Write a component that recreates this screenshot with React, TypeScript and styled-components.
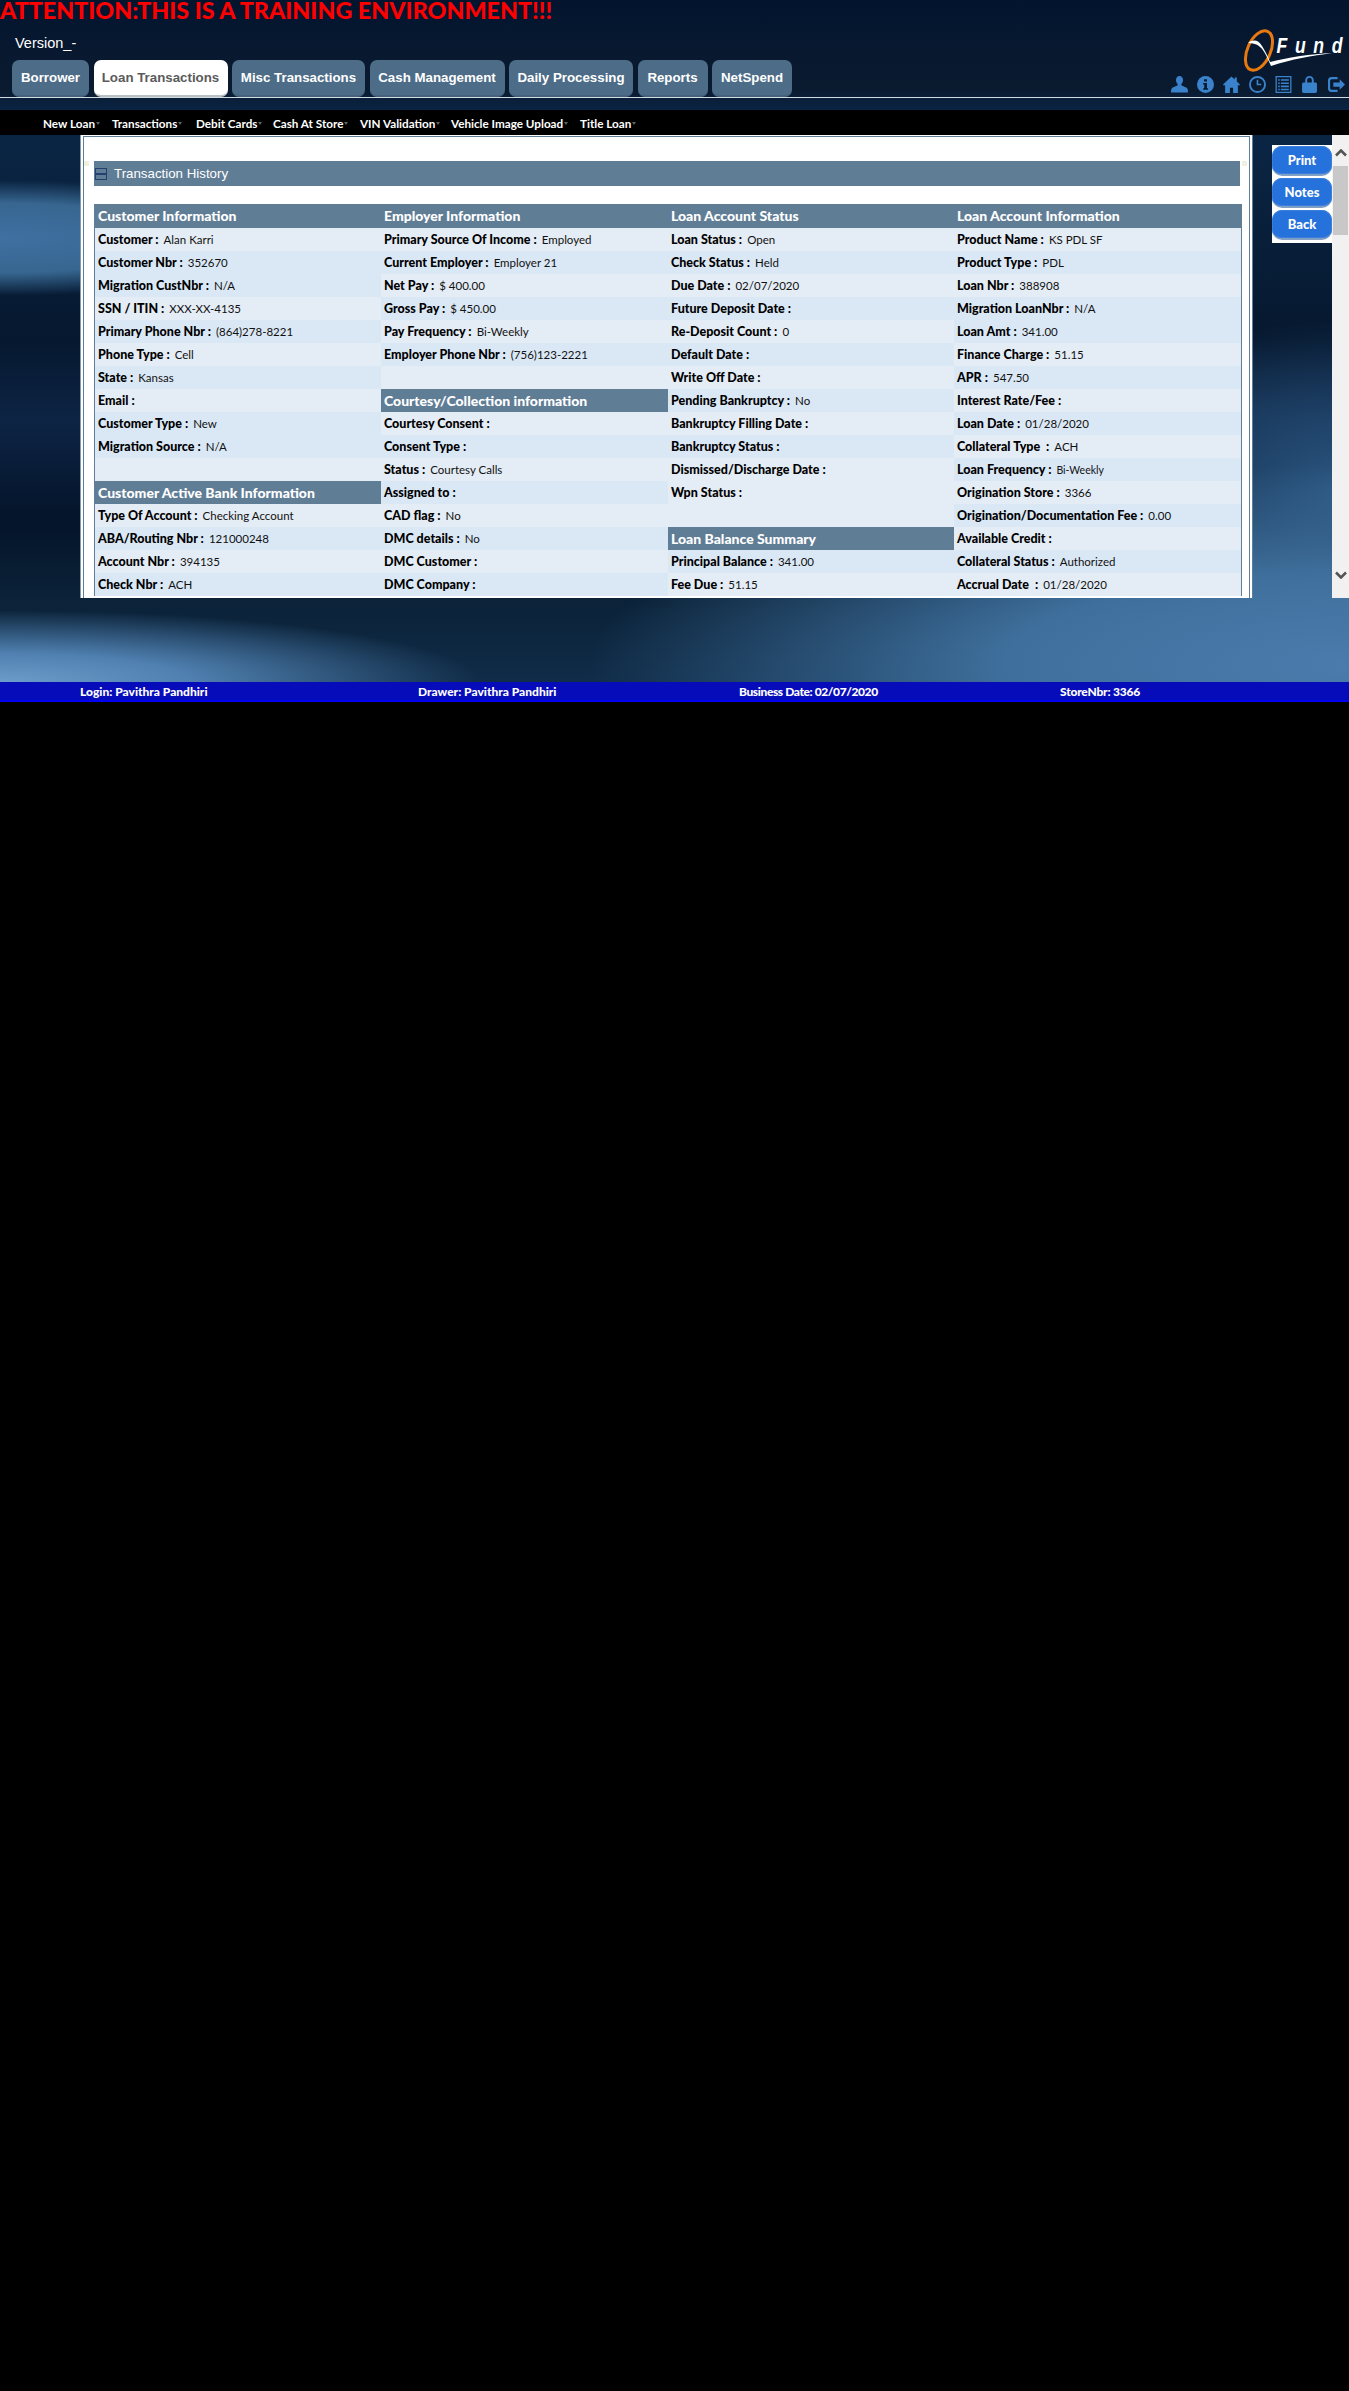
import * as React from 'react';
import styled, { createGlobalStyle } from 'styled-components';

type Row =
  | { kind: 'field'; label: string; value?: string; small?: boolean }
  | { kind: 'head'; label: string }
  | { kind: 'blank' };

const f = (label: string, value?: string, small?: boolean): Row => ({ kind: 'field', label, value, small });
const h = (label: string): Row => ({ kind: 'head', label });
const blank: Row = { kind: 'blank' };

// each column of the page is its own little table, so the stripes do not line up
const COLUMNS: { tones: string; rows: Row[] }[] = [
  {
    tones: 'LBBLBLBLBBLHLBLB',
    rows: [
      f('Customer', 'Alan Karri'),
      f('Customer Nbr', '352670'),
      f('Migration CustNbr', 'N/A'),
      f('SSN / ITIN', 'XXX-XX-4135'),
      f('Primary Phone Nbr', '(864)278-8221'),
      f('Phone Type', 'Cell'),
      f('State', 'Kansas'),
      f('Email'),
      f('Customer Type', 'New'),
      f('Migration Source', 'N/A'),
      blank,
      h('Customer Active Bank Information'),
      f('Type Of Account', 'Checking Account'),
      f('ABA/Routing Nbr', '121000248'),
      f('Account Nbr', '394135'),
      f('Check Nbr', 'ACH'),
    ],
  },
  {
    tones: 'LBLBLBLHLBLBLBLB',
    rows: [
      f('Primary Source Of Income', 'Employed'),
      f('Current Employer', 'Employer 21'),
      f('Net Pay', '$ 400.00'),
      f('Gross Pay', '$ 450.00'),
      f('Pay Frequency', 'Bi-Weekly'),
      f('Employer Phone Nbr', '(756)123-2221'),
      blank,
      h('Courtesy/Collection information'),
      f('Courtesy Consent'),
      f('Consent Type'),
      f('Status', 'Courtesy Calls'),
      f('Assigned to'),
      f('CAD flag', 'No'),
      f('DMC details', 'No'),
      f('DMC Customer'),
      f('DMC Company'),
    ],
  },
  {
    tones: 'LBLBLBLBLBLLLHBL',
    rows: [
      f('Loan Status', 'Open'),
      f('Check Status', 'Held'),
      f('Due Date', '02/07/2020'),
      f('Future Deposit Date'),
      f('Re-Deposit Count', '0'),
      f('Default Date'),
      f('Write Off Date'),
      f('Pending Bankruptcy', 'No'),
      f('Bankruptcy Filling Date'),
      f('Bankruptcy Status'),
      f('Dismissed/Discharge Date'),
      f('Wpn Status'),
      blank,
      h('Loan Balance Summary'),
      f('Principal Balance', '341.00'),
      f('Fee Due', '51.15'),
    ],
  },
  {
    tones: 'LBLBBLBLBLBLBLBL',
    rows: [
      f('Product Name', 'KS PDL SF'),
      f('Product Type', 'PDL'),
      f('Loan Nbr', '388908'),
      f('Migration LoanNbr', 'N/A'),
      f('Loan Amt', '341.00'),
      f('Finance Charge', '51.15'),
      f('APR', '547.50'),
      f('Interest Rate/Fee'),
      f('Loan Date', '01/28/2020'),
      f('Collateral Type\u00a0', 'ACH'),
      f('Loan Frequency', 'Bi-Weekly', true),
      f('Origination Store', '3366'),
      f('Origination/Documentation Fee', '0.00'),
      f('Available Credit'),
      f('Collateral Status', 'Authorized'),
      f('Accrual Date\u00a0', '01/28/2020'),
    ],
  },
];

const TABS = [
  { label: 'Borrower', width: 77 },
  { label: 'Loan Transactions', width: 134, active: true },
  { label: 'Misc Transactions', width: 133 },
  { label: 'Cash Management', width: 135 },
  { label: 'Daily Processing', width: 124 },
  { label: 'Reports', width: 70 },
  { label: 'NetSpend', width: 80 },
];

const SUB_MENU = [
  { label: 'New Loan', width: 69 },
  { label: 'Transactions', width: 84 },
  { label: 'Debit Cards', width: 77 },
  { label: 'Cash At Store', width: 87 },
  { label: 'VIN Validation', width: 91 },
  { label: 'Vehicle Image Upload', width: 129 },
  { label: 'Title Loan', width: 70 },
];

const FOOTER = [
  { label: 'Login: Pavithra Pandhiri', width: 338, tight: 0 },
  { label: 'Drawer: Pavithra Pandhiri', width: 321, tight: 0 },
  { label: 'Business Date: 02/07/2020', width: 321, tight: 0.4 },
  { label: 'StoreNbr: 3366', width: 200, tight: 0.2 },
];

function Logo() {
  return (
    <LogoSvg viewBox="0 0 100 42" width="100" height="42">
      <ellipse cx="16" cy="20.5" rx="11.5" ry="21" transform="rotate(24 16 20.5)" fill="none" stroke="#e8790f" strokeWidth="3" />
      <path d="M5 13c6-4 10-3 14 3 3 5 6 10 8 16 20-5 40-8 62-9-20 3-40 6-61 13-4-9-7-16-11-19-3-3-7-4-12-4z" fill="#fff" />
      <LogoText x="42" y="23" transform="scale(.8 1)">
        Fund
      </LogoText>
    </LogoSvg>
  );
}

const ICONS = [
  <path key="user" d="M8 0c2.1 0 3.3 1.6 3.3 3.8 0 1.5-.6 3-1.5 3.8v1.4c1.6.7 5.2 1.7 5.8 3.3.2.7.4 1.7.4 3.2H0c0-1.500.2-2.500.4-3.200.6-1.600 4.200-2.600 5.800-3.300V7.600C5.300 6.800 4.700 5.300 4.700 3.800 4.700 1.600 5.900 0 8 0z" />,
  <path key="info" fillRule="evenodd" d="M8 0a8 8 0 1 0 0 16A8 8 0 0 0 8 0zM6.600 3h2.800v2.200H6.600zM5.800 6.500h3.600v5h1V13H5.800v-1.500h1v-3.500h-1z" />,
  <path key="home" d="M8 .5 0 8l1 1.100 1-.9V16h4.500v-5h3v5H14V8.200l1 .9L16 8l-3-2.800V1.500h-2v1.900z" />,
  <path key="clock" fillRule="evenodd" d="M8 0a8 8 0 1 0 0 16A8 8 0 0 0 8 0zm0 1.800a6.200 6.200 0 1 1 0 12.400A6.200 6.200 0 0 1 8 1.800zM7.200 3.500v5.300h4.300V7.400H8.700V3.500z" />,
  <path key="list" fillRule="evenodd" d="M.5 0h15v16H.5zm1.200 1.200v13.600h12.600V1.200zM3 3h1.500v1.500H3zm2.500 0H13v1.500H5.500zM3 6h1.500v1.500H3zm2.500 0H13v1.500H5.500zM3 9h1.500v1.500H3zm2.500 0H13v1.500H5.500zM3 12h1.500v1.500H3zm2.500 0H13v1.500H5.500z" />,
  <path key="lock" fillRule="evenodd" d="M8 0c2.400 0 4 1.600 4 3.800V6h1.500c.8 0 1.500.6 1.500 1.400v7.200c0 .8-.7 1.400-1.500 1.400h-11C1.700 16 1 15.400 1 14.600V7.400C1 6.600 1.700 6 2.500 6H4V3.800C4 1.600 5.600 0 8 0zm0 1.700c-1.400 0-2.200.9-2.200 2.200V6h4.400V3.900c0-1.300-.8-2.200-2.200-2.200z" />,
  <path key="out" d="M3 1h6v2H3.500C2.700 3 2 3.700 2 4.500v7c0 .8.7 1.500 1.500 1.500H9v2H3c-1.700 0-3-1.300-3-3V4c0-1.700 1.300-3 3-3zm8 2 5 5-5 5v-3H5V6h6z" />,
];

function Chevron({ down }: { down?: boolean }) {
  return (
    <ScrollArrow viewBox="0 0 12 8" width="12" height="8">
      <path d={down ? 'M1 1.500 6 6.500 11 1.500' : 'M1 6.500 6 1.500 11 6.500'} />
    </ScrollArrow>
  );
}

function InfoRow({ row, tone }: { row: Row; tone: string }) {
  if (row.kind === 'head') return <HeadCell>{row.label}</HeadCell>;
  if (row.kind === 'blank') return <Cell $tone={tone} />;
  return (
    <Cell $tone={tone}>
      <Label>{row.label} :</Label>
      {row.value && <Value $small={row.small}>{row.value}</Value>}
    </Cell>
  );
}

export default function App() {
  return (
    <>
      <GlobalStyle />
      <Page>
        <Attention>ATTENTION:THIS IS A TRAINING ENVIRONMENT!!!</Attention>
        <Header>
          <HeaderLeft>
            <Version>Version_-</Version>
            <Tabs>
              {TABS.map((t) => (
                <Tab key={t.label} $width={t.width} $active={t.active}>
                  {t.label}
                </Tab>
              ))}
            </Tabs>
          </HeaderLeft>
          <HeaderRight>
            <Logo />
            <IconRow>
              {ICONS.map((icon) => (
                <HeaderIcon key={icon.key} viewBox="0 0 16 16" width="17" height="17">
                  {icon}
                </HeaderIcon>
              ))}
            </IconRow>
          </HeaderRight>
        </Header>
        <HeaderGap />
        <SubNav>
          {SUB_MENU.map((m) => (
            <SubItem key={m.label} $width={m.width}>
              {m.label}
              <Caret />
            </SubItem>
          ))}
        </SubNav>
        <Main>
          <Panel>
            <Frame>
              <SectionRow>
                <Speck />
                <SectionTitle>
                  <Collapse />
                  Transaction History
                </SectionTitle>
                <Speck />
              </SectionRow>
              <InfoTable>
                <TopHead>Customer Information</TopHead>
                <TopHead>Employer Information</TopHead>
                <TopHead>Loan Account Status</TopHead>
                <TopHead>Loan Account Information</TopHead>
                {COLUMNS.map((col, i) => (
                  <Column key={i}>
                    {col.rows.map((row, j) => (
                      <InfoRow key={j} row={row} tone={col.tones[j]} />
                    ))}
                  </Column>
                ))}
              </InfoTable>
            </Frame>
          </Panel>
          <Side>
            <ButtonBox>
              <ActionButton>Print</ActionButton>
              <ActionButton>Notes</ActionButton>
              <ActionButton>Back</ActionButton>
            </ButtonBox>
          </Side>
          <Scrollbar>
            <Chevron />
            <Thumb />
            <Chevron down />
          </Scrollbar>
        </Main>
        <Spacer />
        <Footer>
          {FOOTER.map((item) => (
            <FooterItem key={item.label} $width={item.width} $tight={item.tight}>
              {item.label}
            </FooterItem>
          ))}
        </Footer>
      </Page>
    </>
  );
}

const GlobalStyle = createGlobalStyle`
  html, body {
    margin: 0;
    padding: 0;
    background: #000;
    min-height: 2391px;
  }
`;

const Page = styled.div`
  height: 702px;
  display: flex;
  flex-direction: column;
  font-family: 'Lato', 'Noto Sans', sans-serif;
  background:
    radial-gradient(ellipse 480px 72px at 0 682px, #6c9cc9 0%, #4f80b0 40%, rgba(40, 80, 120, 0) 100%),
    radial-gradient(ellipse 300px 58px at 0 238px, #3f70a1 0%, #376690 60%, rgba(40, 80, 120, 0) 100%),
    radial-gradient(ellipse 760px 200px at 1349px 665px, #4a7bac 0%, #3f709d 45%, rgba(50, 90, 130, 0) 100%),
    radial-gradient(ellipse 300px 170px at 1349px 490px, #2c5883 0%, rgba(40, 80, 120, 0) 100%),
    linear-gradient(180deg, #03142f 0, #0a1b30 90px, #0a2444 110px, #0a2544 140px, #06182f 340px, #0d2444 420px, #04142a 520px, #0b2238 600px, #102c48 682px);
`;

const Attention = styled.div`
  height: 20px;
  line-height: 20px;
  font-size: 23.3px;
  font-weight: 900;
  color: #f00;
  white-space: nowrap;
`;

const Header = styled.header`
  height: 77px;
  display: flex;
  justify-content: space-between;
  border-bottom: 1px solid #d3dae0;
`;

const HeaderLeft = styled.div`
  display: flex;
  flex-direction: column;
  padding-left: 12px;
`;

const Version = styled.div`
  height: 40px;
  line-height: 47px;
  padding-left: 3px;
  font-family: 'Liberation Sans', Arial, sans-serif;
  font-size: 14.5px;
  color: #fff;
`;

const Tabs = styled.nav`
  display: flex;
  gap: 4.5px;
`;

const Tab = styled.div<{ $width: number; $active?: boolean }>`
  width: ${(p) => p.$width}px;
  height: 37px;
  box-sizing: border-box;
  display: flex;
  align-items: center;
  justify-content: center;
  border-radius: 7px;
  font-family: 'Liberation Sans', Arial, sans-serif;
  font-size: 13.3px;
  font-weight: 700;
  background: ${(p) => (p.$active ? '#fff' : '#4d6c87')};
  color: ${(p) => (p.$active ? '#5b5b5b' : '#fff')};
  border-bottom: 2px solid ${(p) => (p.$active ? '#b9c0c6' : '#44627c')};
`;

const HeaderRight = styled.div`
  width: 178px;
  display: flex;
  flex-direction: column;
  padding-top: 10px;
`;

const LogoSvg = styled.svg`
  display: block;
  align-self: flex-end;
  margin-right: 6px;
  overflow: visible;
`;

const LogoText = styled.text`
  font-family: 'Liberation Sans', Arial, sans-serif;
  font-size: 22px;
  font-style: italic;
  font-weight: 700;
  letter-spacing: 9.5px;
  fill: #fff;
`;

const IconRow = styled.div`
  display: flex;
  gap: 9.1px;
  margin-top: 4px;
`;

const HeaderIcon = styled.svg`
  display: block;
  fill: #3a82cc;
`;

const HeaderGap = styled.div`
  height: 12px;
`;

const SubNav = styled.nav`
  height: 25px;
  display: flex;
  align-items: center;
  padding-left: 43px;
  background: #000;
`;

const SubItem = styled.div<{ $width: number }>`
  width: ${(p) => p.$width}px;
  display: flex;
  align-items: center;
  font-size: 11.7px;
  font-weight: 700;
  color: #fff;
  white-space: nowrap;
`;

const Caret = styled.span`
  width: 0;
  height: 0;
  margin: 2px 0 0 1px;
  border-left: 2.500px solid transparent;
  border-right: 2.500px solid transparent;
  border-top: 3px solid #566;
`;

const Main = styled.main`
  height: 463px;
  display: flex;
  padding-left: 80px;
`;

const Panel = styled.section`
  width: 1173px;
  height: 463px;
  box-sizing: border-box;
  overflow: hidden;
  background: #fff;
  border-left: 1px solid #7f98ad;
  border-right: 1px solid #5f7e97;
  padding: 1px 2px 0;
`;

const Frame = styled.div`
  height: 462px;
  box-sizing: border-box;
  overflow: hidden;
  border: 1px solid #5f7e97;
  border-bottom: none;
`;

const SectionRow = styled.div`
  height: 67px;
  box-sizing: border-box;
  display: flex;
  align-items: flex-start;
  gap: 2px;
  padding-top: 24px;
`;

const Speck = styled.span`
  width: 5px;
  height: 5px;
  flex: none;
  background: #eef1e2;
  &:first-child {
    margin-right: 3px;
  }
`;

const SectionTitle = styled.div`
  width: 1146px;
  height: 25px;
  flex: none;
  display: flex;
  align-items: center;
  gap: 7px;
  padding-left: 1px;
  box-sizing: border-box;
  background: #607d96;
  font-family: 'Liberation Sans', Arial, sans-serif;
  font-size: 13.3px;
  color: #fff;
`;

const Collapse = styled.span`
  width: 12px;
  height: 12px;
  flex: none;
  box-sizing: border-box;
  border: 1px solid #24406e;
  display: flex;
  align-items: center;
  justify-content: center;
  &::before {
    content: '';
    width: 10px;
    height: 2px;
    background: #24406e;
  }
`;

const InfoTable = styled.div`
  width: 1148px;
  margin-left: 10px;
  box-sizing: border-box;
  display: grid;
  grid-template-columns: 286px 287px 286px 288px;
  grid-template-rows: 24px auto;
  border-left: 1px solid #5f7e97;
`;

const TopHead = styled.div`
  height: 24px;
  line-height: 24px;
  padding-left: 3px;
  background: #607d96;
  font-size: 14px;
  font-weight: 900;
  color: #fff;
  white-space: nowrap;
`;

const Column = styled.div`
  display: flex;
  flex-direction: column;
  &:last-child {
    box-sizing: border-box;
    border-right: 1px solid #5f7e97;
  }
`;

const Cell = styled.div<{ $tone: string }>`
  height: 23px;
  display: flex;
  align-items: center;
  gap: 5px;
  padding-left: 3px;
  background: ${(p) => (p.$tone === 'B' ? '#dae8f6' : '#e4ecf5')};
  white-space: nowrap;
`;

const HeadCell = styled.div`
  height: 23px;
  line-height: 23px;
  padding-left: 3px;
  background: #607d96;
  font-size: 14px;
  font-weight: 900;
  color: #fff;
  white-space: nowrap;
`;

const Label = styled.span`
  font-size: 12.5px;
  font-weight: 900;
  color: #000;
`;

const Value = styled.span<{ $small?: boolean }>`
  font-size: ${(p) => (p.$small ? '10.5px' : '11.5px')};
  color: #111;
`;

const Side = styled.aside`
  width: 60px;
  margin-left: 19px;
  padding-top: 10px;
`;

const ButtonBox = styled.div`
  display: flex;
  flex-direction: column;
  gap: 2px;
  padding: 1px 0 3px;
  background: #fff;
`;

const ActionButton = styled.button`
  width: 60px;
  height: 30px;
  padding: 0;
  border: none;
  border-bottom: 2px solid #7f9fc4;
  border-radius: 10px;
  background: #2672dc;
  box-shadow: inset 0 0 0 1px #3b7fdb;
  font-family: 'Lato', 'Noto Sans', sans-serif;
  font-size: 13px;
  font-weight: 900;
  color: #fff;
`;

const Scrollbar = styled.div`
  width: 17px;
  box-sizing: border-box;
  display: flex;
  flex-direction: column;
  align-items: center;
  padding: 14px 0 19px;
  background: #f1f1f1;
`;

const ScrollArrow = styled.svg`
  flex: none;
  fill: none;
  stroke: #555;
  stroke-width: 2.600;
  &:last-child {
    margin-top: auto;
  }
`;

const Thumb = styled.div`
  width: 15px;
  height: 69px;
  margin-top: 9px;
  background: #c8c8c8;
`;

const Spacer = styled.div`
  flex: 1;
`;

const Footer = styled.footer`
  height: 20px;
  box-sizing: border-box;
  display: flex;
  align-items: center;
  padding-left: 80px;
  background: #070cbb;
  border-bottom: 2px solid #0000f5;
`;

const FooterItem = styled.div<{ $width: number; $tight: number }>`
  width: ${(p) => p.$width}px;
  font-size: 12px;
  font-weight: 900;
  letter-spacing: ${(p) => -p.$tight}px;
  color: #fff;
  white-space: nowrap;
`;
